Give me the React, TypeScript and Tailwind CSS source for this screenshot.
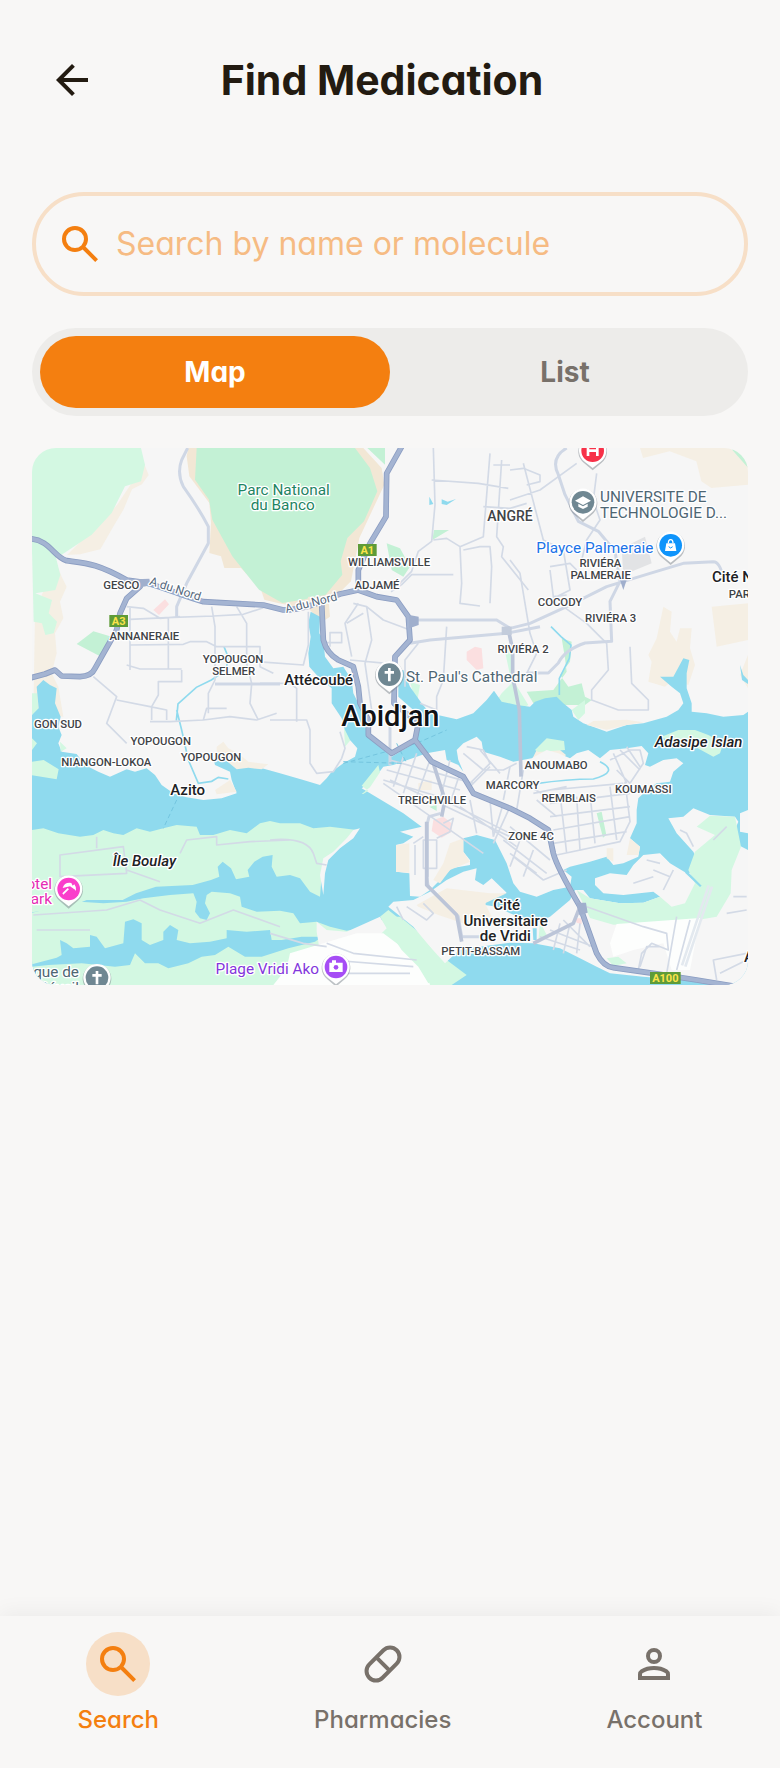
import type { ReactNode } from "react";

const HALO = "[paint-order:stroke] stroke-white [stroke-linejoin:round]";

function Arrow() {
  return (
    <svg viewBox="0 0 24 24" className="size-12" fill="currentColor" aria-hidden="true">
      <path d="M7.825 13l5.6 5.6L12 20l-8-8 8-8 1.425 1.4-5.6 5.6H20v2z" />
    </svg>
  );
}

function SearchIcon() {
  return (
    <svg viewBox="0 -960 960 960" className="size-12 shrink-0" fill="currentColor" aria-hidden="true">
      <path d="M784-120 532-372q-30 24-69 38t-83 14q-109 0-184.5-75.5T120-580q0-109 75.5-184.5T380-840q109 0 184.5 75.5T640-580q0 44-14 83t-38 69l252 252-56 56ZM380-400q75 0 127.5-52.5T560-580q0-75-52.5-127.5T380-760q-75 0-127.5 52.5T200-580q0 75 52.5 127.5T380-400Z" />
    </svg>
  );
}

function PillIcon() {
  return (
    <svg viewBox="0 0 24 24" className="size-12" fill="none" stroke="currentColor" strokeWidth="2" aria-hidden="true">
      <g transform="rotate(-45 12 12)">
        <rect x="2.3" y="7.3" width="19.4" height="9.4" rx="4.7" />
        <path d="M12 7.3v9.4" />
      </g>
    </svg>
  );
}

function PersonIcon() {
  return (
    <svg viewBox="0 0 24 24" className="size-12" fill="none" stroke="currentColor" strokeWidth="2" aria-hidden="true">
      <circle cx="12" cy="8" r="3" />
      <path d="M5 19v-1.8q0-1 .9-1.6Q8.5 14 12 14t6.100 1.600q.9.600.9 1.600V19z" />
    </svg>
  );
}

function Pin({ x, y, color, children }: { x: number; y: number; color: string; children?: ReactNode }) {
  return (
    <g transform={`translate(${x} ${y})`}>
      <path d="M0 56L-26 34A43 43 0 1 1 26 34Z" fill="#7d858d" opacity=".5" transform="translate(0 3)" />
      <path d="M0 52L-24 33A41 41 0 1 1 24 33Z" fill="#fff" />
      <circle r="34" fill={color} />
      {children}
    </g>
  );
}

function Shield({ x, y, w, text }: { x: number; y: number; w: number; text: string }) {
  return (
    <g>
      <rect x={x} y={y} width={w} height="36" fill="#5e9b38" />
      <text x={x + w / 2} y={y + 29} textAnchor="middle" className="fill-[#fbe34a] text-[33px] font-bold">
        {text}
      </text>
    </g>
  );
}

type Place = [number, number, string];

const districts: Place[] = [
  [274, 447, "GESCO"],
  [343, 600, "ANNANERAIE"],
  [609, 670, "YOPOUGON"],
  [611, 706, "SELMER"],
  [1077, 378, "WILLIAMSVILLE"],
  [1041, 448, "ADJAMÉ"],
  [1711, 380, "RIVIÉRA"],
  [1712, 416, "PALMERAIE"],
  [1590, 497, "COCODY"],
  [1742, 547, "RIVIÉRA 3"],
  [1479, 638, "RIVIÉRA 2"],
  [84, 865, "GON SUD"],
  [392, 914, "YOPOUGON"],
  [543, 964, "YOPOUGON"],
  [229, 979, "NIANGON-LOKOA"],
  [1206, 1092, "TREICHVILLE"],
  [1448, 1048, "MARCORY"],
  [1578, 988, "ANOUMABO"],
  [1616, 1086, "REMBLAIS"],
  [1840, 1058, "KOUMASSI"],
  [1503, 1201, "ZONE 4C"],
  [1352, 1546, "PETIT-BASSAM"],
  [2128, 473, "PAR"],
];

const towns: Place[] = [
  [866, 734, "Attécoubé"],
  [473, 1065, "Azito"],
  [1430, 1410, "Cité"],
  [1427, 1457, "Universitaire"],
  [1426, 1504, "de Vridi"],
];

function AbidjanMap() {
  return (
    <svg
      viewBox="6 24 2148 1611"
      role="img"
      aria-label="Map of Abidjan"
      className="block h-auto w-full rounded-3xl bg-[#f6f6f6] font-[Roboto,sans-serif]"
    >
      {/* Parks and dry ground in the north */}
      <path fill="#f5efe4" d="M338 60l18 45-20 28-30 15-25 60-30 50-40 70-60 15-40 2 150-150 60-90z" />
      <path fill="#d3f8e2" d="M6 24H333l12 50-12 50-48 15-40 80-60 65-90 60-30 12-65-15z" />
      <path fill="#f5efe4" d="M75 360l20 50 15 30-20 45 10 50-25 45 5 60-15 60 20 40 15 90-90-10 5-300z" />
      <path fill="#d3f8e2" d="M6 330l70 15 15 60-15 45-60 10 50 20-10 40 25 25-10 35-25 5-10-35-25-5zM6 760l15 0 5 50-20 15z" />
      <path fill="#f2e7d5" d="M475 24H1000l55 60 8 50-75 160-25 130-60 60-110 15-50-10-40-10-10-30-60-65-50 0-10-35-35-10 5-90-5-60-60-80-8-60z" />
      <path fill="#c3f1d5" d="M500 24H975l45 60 22 70-40 90-50 50-20 70 5 40-50 60-70 15-60 10-70-40-80-100-60-110-10-60-42-60z" />
      <path fill="#f2e7d5" d="M835 470l60 0 5 60-30 20-25-35-20-20z" />
      <path fill="#c3f1d5" d="M1012 24h53v50zM1070 310l40 15 30 55-20 30-35-20zM1212 270l45 0-50 30zM140 612l50-38 50 15-30 60z" />
      <path fill="#fbdfe0" d="M370 510l35-32 12 15-30 32zM1310 635l25-15 20 5 5 60-20 5-30-30z" />
      <path fill="#f5efe4" d="M1830 24h270l54 50v60l-110 10-30-20-15-60-80-30-80 20zM1900 500l25 15-5 60 20 30 10-40 35 0-5 60 15 50-20 60-45-15-25 20-50-15 10-60-10-20 25-50zM2045 500l110-10v110l-95 20zM2130 705l24-60v100z" />
      <path fill="#e2e3e5" d="M1775 325l70-35 20 80-85 35z" />
      <path fill="#c3f1d5" d="M2105 28l49 55V62l-20-30zM1595 595l30 10-5 60-30 40 25 35 40-10 10 40 20 10-20 15-80 0-75-5-20-35 80-5 40-55-5-40z" />
      <path fill="#d3f8e2" d="M1415 760l30-30-25-120 20 10 15 110 40 65-70 40-50-15zM1140 725l30 10-10 60zM1625 810l40-30 0 40-20 20zM940 830l25-60 30 90-50 60z" />

      {/* Lagoon */}
      <path
        fill="#8fdaee"
        d="M20 740L40 720L60 735L80 745L75 790L92 830L85 860L95 885L85 910L95 935L140 942L165 975L205 995L240 1010L290 988L315 995L350 985L375 1005L395 1035L430 1060L470 1072L520 1080L575 1075L620 1060L605 1020L600 995L555 975L550 955L580 950L620 975L680 980L750 1000L820 1020L870 1035L890 1015L905 995L940 970L975 950L982 925L960 900L945 870L935 835L905 790L905 745L860 705L838 680L835 640L842 590L835 550L842 515L870 530L868 580L880 600L885 650L910 685L940 680L965 720L970 760L990 800L1005 830L1012 890L1085 950L1160 905L1165 870L1150 810L1105 770L1105 690L1120 690L1140 740L1175 790L1200 820L1280 838L1330 820L1370 780L1392 752L1415 785L1460 795L1500 800L1515 785L1545 775L1580 770L1600 790L1625 810L1630 830L1660 850L1730 875L1790 855L1840 850L1910 830L1945 810L1960 790L1950 760L1925 740L1890 710L1930 710L1960 655L1978 660L1970 700L1970 745L1985 790L1985 815L2030 820L2080 830L2140 825L2154 815V1640H6V825L26 805Z"
      />
      <path fill="#f5efe4" d="M560 920l20-15 15 20 30 15 30 25 60 8-20 15-40-5-35 5-30-25-30-5zM555 1050l45-30 20 35-60 8zM1670 855l60 14 60-14 50-8-50-8-100 4z" />
      <path fill="#8fdaee" d="M1198 170l12 22-12 3zM1235 178l18 7 25-8-28 18-15-3zM2130 675l10 30 14 15v12l-18-12z" />

      {/* Lagoon islands */}
      <path fill="#d3f8e2" d="M6 895l15 15-15 20zM6 965l35-5 45 28-6 30-74-12zM90 905l20 20-18 10z" />
      <path fill="#d3f8e2" d="M1895 890l50-20 50 0 40 15 45 25-10 30-20 10-55-30-60-5z" />
      <path fill="#f5efe4" d="M1505 960l15-30 70 0 18 15-20 25z" />
      <path fill="#d3f8e2" d="M1515 930l35-35 52 8 3 27-80 6z" />

      {/* Île Boulay */}
      <path
        fill="#d3f8e2"
        d="M6 1170l34-5 45 15 65 10 40-5 30-15 30 10 30 5 40-20 40 10 40-10 40-10 60 5 10 25h40l50-15 50 10 40-30 30-7 30 7h60l40 15 50-5 80 10-20 30-40 30-35 35-10 40-5 65-30-15-30-40-30-10-40 5-15-30 3-35-30 5-25 15-20 25 5 20-40 8-15-33-25-20-15 15 5 30-25 10-55 15-110 5-60 20-40 20H170l-30 12-60 15-74 10z"
      />
      <path fill="#f6f6f6" d="M990 1165l-20 30-40 30-35 35-10 40-5 65-10-60 10-50 30-20 40-40 20-25z" />

      {/* Southern spit */}
      <path
        fill="#d3f8e2"
        d="M6 1418l74-18 70-15 70 5 70-5 50-10 80-10 70-5 10 25-5 30 15 20 20 5 10-20-15-30 5-25 15-10 55 5 30 10 5 30 45 15 70-3 40 8 20 30 50-5 40 15 50 12 60-10 65-32 35 0 60 50 80 80 60 45-60 40H6z"
      />
      <path
        fill="#8fdaee"
        d="M6 1573l74-20 15-8-5-45 20 10 20 15 50-5v-35l20 5 25 35 55-15 5-65 25-7 25 12v50l25 15 40-15v-25l20-20 25 15-5 30 40 10 60-5 50-10v-25l60 5 70-5 5 30 30 0 60-10 60 0-20 15-80 20-80 25-50 0-50-30-40 25-40 5-40 20-60 15-30-15h-40l-30-30-15 35-45 5-50-5-50-5-100 5-80 8z"
      />
      <path fill="#f6f6f6" d="M860 1445l30 25 60 5 100-45 20 35-50 50-100 30-50-10-10-60z" />
      <path fill="#fdfefd" d="M780 1540l100-30 100-30 80 0 60 45 50 10 30 100H730l40-50z" />

      {/* Vridi, airport and the east bank */}
      <path
        fill="#f6f6f6"
        d="M1915 1135l45-5 30-25 50 20 75 5 10 15-15 35 15 35 29 15V1640h-74l-120-20-120-10-100-10-40-20-50-25-60-30-80-15-70-2-150 20-45 42-45-50-50-60-75-60 15-15 60-5 50-25 50-35 50-25 40-10-5 35 25 15 25-20 45 43-60 22-5 15 35 5 40 20 75 30 45-20 60-50 15-30h25l20 25 90 15 70-2 50-18-20-15-90 10-60-5-25-25v-20l45-15 50 5 20-30 30-30 50-5 30 30 50 30 30-5 5-30-15-30-50-55zM2154 1110l-24 10 0 55 24 5z"
      />
      <path
        fill="#d3f8e2"
        d="M2040 1127l75 3 18 90-28 70-3 70-42 70-80 14-230 10-70-20-40-84 40 25 90 15 70-2 50-18 35 30 40-10 30-60-20-40 20-55 60-50-55-25z"
      />
      <path fill="#d3f8e2" d="M1050 1430l25-20 75 60 50 50 50 80-55 30-30-50-50-50-40-60z" />
      <path fill="#fdfefd" d="M1760 1452l250-18-30 156-55 0-25-80-90 20-60 20-10-40z" />
      <path fill="none" stroke="#e3e9ef" strokeWidth="8" d="M2046 1340l-80 240M2036 1336l-80 240" />
      <path fill="#f5efe4" d="M1160 1395l90-50 130 15 50 0-65 30 30 60-80 5-90-30-60-25z" />
      <path fill="#8fdaee" d="M1970 1292l45 45-5 4-45-43zM1508 1465h12v35h-10z" />
      <path fill="#d3f8e2" d="M1530 1445l20 40-25 20zM1730 1555l35-5 25 20-40 8z" />

      {/* Treichville to Koumassi */}
      <path
        fill="#f6f6f6"
        d="M995 1045l35-25 30-40 30-5 100-35 55-10 5 30 35 15 15 20-15-35-5-30 20-20 40-20 15 15 5 30 50 15 40 15 55-10 45-25 35 10 35 15 20-15 35-10 35 25 30-25 50-5 45-7 20 22-10 35 15 5 40-20 40-5 20 15-30 25-10 30-40 5-30 20-25 25-5 35v40l-20 45 30 25-5 30-45 20-30 5-20-25-50 15-60 15-20 10 25 20-5 30-50 10-50 20-50-15-20-25-20-60-20-40-15-30-55-15-40 10v40l20 25v15l-55 10-25 25-40 40-30 20-30-2-2-68-40-5v-80l22-5 30-20-40-15 65-15-55-40-100-60z"
      />
      <path fill="#d3f8e2" d="M1045 975l-50 62 20 15-15 10-5 0 25-20 30-45z" />
      <path fill="#f5efe4" d="M1098 1215l40-5v88l-40-3zM1260 1210l40-15v40l20 30-60 25-30 40-20-10 30-50zM1165 1030l40-10 0 30-40 0zM1800 1195l30 25-5 25-35 0zM1730 1225l20 0 0 40-20-10z" />
      <path fill="#fbdfe0" d="M1210 1140l30-10 25 20v25l-30 18-30-20zM1635 1435l20 0v18l-15-5z" />
      <path fill="#c3f1d5" d="M1700 1120l15-5 14 70-10 8zM1198 1100l22-5 0 18z" />
      <path fill="none" stroke="#8fdaee" strokeWidth="5" d="M1710 965q60 30-20 52-80 0-170 14M440 810l15 60 20 90 30 70 40-6 20-12 30 5M582 620l12 30-5 40-45 30-45 22-55 50-5 50M1563 560l30 30 30 25-5 40-30 60 0 50" />

      {/* Street grids */}
      <g fill="none" stroke="#d3dae6" strokeWidth="5" strokeLinejoin="round">
        <path d="M300 500V690M290 500l50 5 50 30 60-5M300 538l110-5 140-5 90-5 60-20M415 535v153M300 615l160-2 20-8h50l30 15h130v60l40 20M290 675l40 12h125M455 690v35h-70v40l-20 35v40M545 500l10 60v160l-20 40v60M620 500l30 50v120l15 60-5 60 25 50M190 710l70 60-15 40-15 40 60 60M260 780l100 20 50 10v30M360 845h60l100-5 80-10 80 10 60-20M520 840l10-35 60 0" />
        <path d="M690 730h90l20 15 0 100M720 840h110l10 30v100l20 30 50-5 25-40 10-30-15-50M680 665l140 10 15-60 0-100M900 620v-42h35v30h-45M950 550l50-30M1010 500l15 100-20 70 20 140M970 490l40 10 50 40 80 30M960 660l110 10M985 490l-40 60 20 100" />
        <path d="M1210 24l5 170-10 110-40 30-20 60-60 60 30-20 30-30h125M1205 120l140 10 90 15M1380 40l-20 250-70 30 5 110-5 60 60 8M1290 320l-40-25-40 5M1360 200l80 5 50-15M1390 75l50 0M1415 60l-15 230 20 30-5 30 80 100M1440 90l40-5 50 20 0 20-40 10M1300 330l50-10 30 0 5 60-5 110M1165 610l-40 50 0 80M1250 560l-10 160-20 50 0 40-50-20" />
        <path d="M1480 70l60 230 60 30 20 120-60 30M1560 380l60-10 20 20M1560 390l10 80 40-5M1440 360l30 40 30 180 20 60-30 60M1700 100l-10 80 20 60-40 60-20 80M1440 180l90-30 110-80M1600 500l70 50 60 60 5 80-50 60 0 30 80 30h90l0-30-50-50-5-110" />
        <path d="M1080 960l250 70M1070 990l220 60M1060 1020l200 60M1120 950l-30 90M1160 940l-40 120M1200 960l-40 110M1260 960l-30 120M1290 1000l-30 90M1060 1030l300 210M1080 1020l360 170M1260 1090l180 90M1290 1100l170 120M1320 1080l20 100M1380 1080l10 110M1420 1090l-30 100M1440 1100l-50 110M1350 930l60 70M1300 940l60 50 60 0 40-20M1310 920l50 10 20 40-60 60" />
        <path d="M1380 980l-60 60M1440 980l-20 100M1480 990l-20 120M1560 1050l220-20M1560 1090l240-30M1560 1130l240-30M1570 1170l230-40M1570 1210l220-35M1580 1245l190-40 30-60-15-120M1590 1060l20 180M1640 1070l10 160M1680 1060l15 150M1740 1040l20 160M1500 1040l70 40M1510 1060l100-20M1520 1080l60 50M1750 940l40 90M1770 930l60 60M1790 920l40 60M1740 960l60-30 30 0 10 40-40 60-40-40" />
        <path d="M1440 1160l120 100M1420 1200l130 100M1450 1250l90 70 70-30M1440 1240l80 60M1470 1200l-30 80M1510 1230l-30 80M1155 1215v90M1220 1200v85h-40v-85zM1240 1150l30-15-10 40-40 20M1180 1190l-30 20M1100 1400l20 40M1130 1400l60 40 20-20-30-30M1530 1490l120 40M1560 1470l130 50M1590 1450l-20 80M1620 1450l-20 90M1650 1450l-10 90M1600 1440l80 80" />
        <path d="M1670 1400l170 60 70 20 5 50-50-20-30 30-10 50M1830 1580l20-60 40 0M1940 1430l-30 170M1980 1440l-40 150M1950 1170l20 10 20 40M2050 1200l40-40M1850 1260l40 10M1870 1290l50 20M1810 1330l60-20M1900 1350l30-60M2110 1370l40 0M2090 1420l60-10M2070 1600l80-40M2060 1620l-10-60 100-20" />
        <path d="M90 1245l190-25 10 80-200 10zM10 1425l220-15 100-30 60 30 120 40 100-40 140 50M290 1290l100 35M200 1190v35M450 1240l20-40 90-10 0 25 100-10 120-5M20 1470l160 0M720 1200q110-10 130 40l10 30 30 5M720 1480l100 30 70 10M890 1510l80 30 190 20M900 1600l240 0M900 1560l250 20" />
      </g>
      <g fill="none" stroke="#cfd7e5" strokeWidth="9" strokeLinejoin="round">
        <path d="M473 24L455 60q-15 40 5 80 50 70 75 120v50L470 430l-30 70v30" />
        <path d="M1150 540h250l40 25 60-15 110-50 120-60 130-40 100-30 90-5q20 0 30 50M1140 610l60-10 230-20 100-20M1610 24q-50 30-25 80l20 60 40 80 60 30 50 60 15 90-30 60 5 120-80 5q-60 20-80 60l-30 30-60 0-50 30" />
        <path d="M555 732H750M1080 855v120M1192 1310l0-160 5-20 35-10M1190 1310l5 30 40 40 50 50 10 60 60 0" />
      </g>
      <path fill="none" stroke="#bcc5d8" strokeWidth="11" strokeLinejoin="round" d="M1433 560l15 70 0 80 20 100 5 200M1210 970l35 110-10 50M1190 1145v190l90 90 15 80M1650 1400l-20 50-80 40-40 20" />
      <path fill="none" stroke="#74c5df" strokeWidth="3" strokeDasharray="14 9" d="M440 1080l-40 85M940 970l220-60 90-40M940 965l180 5M1100 910l30 60" />

      {/* Highways */}
      <g fill="none" strokeLinejoin="round" strokeLinecap="round">
        {[
          { id: "edge", color: "#8b9dc2", width: 17 },
          { id: "core", color: "#a4b4d2", width: 12 },
        ].map((s) => (
          <path
            key={s.id}
            stroke={s.color}
            strokeWidth={s.width}
            d="M0 296C60 300 70 350 110 362C170 370 200 370 290 420L345 428C400 440 460 470 520 485L700 495L760 510C830 510 880 480 930 462L985 450M330 440L290 475L270 520L260 570L195 685Q185 708 150 710L95 708L75 690L45 702L0 714M1115 20L1070 100L1068 230L1020 310L985 390L985 450L1040 470L1100 480L1135 530L1140 600L1095 650L1092 790L1165 850L1155 900L1085 940L1015 885L1015 840L990 790L985 740L970 680L925 660Q890 640 880 600L875 490M1155 900L1205 965L1300 1010L1330 1060L1440 1105L1500 1135L1555 1170L1570 1240Q1580 1280 1650 1400L1700 1540Q1720 1580 1750 1583L1870 1600L2000 1620L2110 1638"
          />
        ))}
      </g>
      <path fill="#a0afcd" d="M1138 525l28 5v25l-28 10zM318 418l40-2 4 20-40 8zM1640 1388l28 0 5 30-25 8zM1770 420l20 0-10 30z" />
      <path fill="#c3ccdb" d="M1415 560h30v25h-30z" />

      <Shield x={238} y={525} w={56} text="A3" />
      <Shield x={984} y={312} w={56} text="A1" />
      <Shield x={1860} y={1596} w={92} text="A100" />

      {/* Place names */}
      <g textAnchor="middle" strokeWidth="8" className={HALO}>
        <g className="fill-[#3f4347] text-[34px] font-medium">
          {districts.map(([x, y, name]) => (
            <text key={`${name}-${x}`} x={x} y={y}>
              {name}
            </text>
          ))}
          <text x="1440" y="242" className="text-[42px]">ANGRÉ</text>
        </g>
        <g className="fill-[#202124] text-[45px] font-medium">
          {towns.map(([x, y, name]) => (
            <text key={name} x={x} y={y}>
              {name}
            </text>
          ))}
          <text x="2046" y="427" textAnchor="start">Cité N</text>
          <text x="2142" y="1565" textAnchor="start">A</text>
          <text x="343" y="1278" className="italic">Île Boulay</text>
          <text x="1874" y="920" textAnchor="start" className="italic">Adasipe Islan</text>
        </g>
        <text x="1081" y="857" className="fill-[#111214] text-[87px] font-medium">Abidjan</text>
        <g className="fill-[#1e8463] text-[46px]">
          <text x="761" y="164">Parc National</text>
          <text x="758" y="210">du Banco</text>
        </g>
        <g className="fill-[#4e6673] text-[46px]">
          <text x="1710" y="187" textAnchor="start">UNIVERSITE DE</text>
          <text x="1710" y="234" textAnchor="start">TECHNOLOGIE D...</text>
          <text x="1128" y="726" textAnchor="start">St. Paul's Cathedral</text>
          <text x="147" y="1612" textAnchor="end">que de</text>
          <text x="147" y="1658" textAnchor="end">Réveil</text>
        </g>
        <text x="1870" y="338" textAnchor="end" className="fill-[#1a73e8] text-[46px]">Playce Palmeraie</text>
        <text x="867" y="1603" textAnchor="end" className="fill-[#8336dc] text-[46px]">Plage Vridi Ako</text>
        <g className="fill-[#e62cb4] text-[46px]">
          <text x="66" y="1346" textAnchor="end">otel</text>
          <text x="66" y="1392" textAnchor="end">ark</text>
        </g>
        <g className="fill-[#56697c] text-[36px]">
          <text transform="translate(432 458) rotate(18)">A du Nord</text>
          <text transform="translate(846 500) rotate(-14)">A du Nord</text>
        </g>
      </g>

      <Pin x={1688} y={32} color="#f73148">
        <path d="M-14-18V16M14-18V16M-14 0H14" stroke="#fff" strokeWidth="8" />
      </Pin>
      <Pin x={1659} y={187} color="#6f8792">
        <path d="M0-18L24-5 0 8-24-5zM-14 4v9L0 20 14 13V4L0 12z" fill="#fff" />
      </Pin>
      <Pin x={1922} y={316} color="#0f94fb">
        <path d="M-13-6h26l4 23h-34z" fill="#fff" />
        <path d="M-7-6q0-11 7-11t7 11" fill="none" stroke="#fff" strokeWidth="4" />
        <path d="M-6 4q6 8 12 0" fill="none" stroke="#0f94fb" strokeWidth="3" />
      </Pin>
      <Pin x={1078} y={704} color="#6f8792">
        <path d="M0-20V20M-14-7H14" stroke="#fff" strokeWidth="8" />
      </Pin>
      <Pin x={116} y={1347} color="#fa3ecb">
        <path d="M-18-3q5-18 26-15L17 1 4-8zM17-14q7 8 5 20L10-8zM-3-3l4 4-17 16-3-4z" fill="#fff" />
      </Pin>
      <Pin x={201} y={1613} color="#6f8792">
        <path d="M0-20V20M-14-7H14" stroke="#fff" strokeWidth="8" />
      </Pin>
      <Pin x={918} y={1581} color="#a64df5">
        <path d="M-20-13h8v-7h12v7h20v28h-40z" fill="#fff" />
        <circle cy="1" r="7" fill="#a64df5" />
      </Pin>
    </svg>
  );
}

const navItems = [
  { label: "Search", icon: <SearchIcon />, active: true },
  { label: "Pharmacies", icon: <PillIcon />, active: false },
  { label: "Account", icon: <PersonIcon />, active: false },
];

export default function App() {
  return (
    <div className="flex min-h-screen flex-col bg-[#f8f7f6] font-[Inter,sans-serif] text-[#231b11] [font-feature-settings:'cv11'_1]">
      <header className="flex items-center px-8 py-10">
        <button type="button" aria-label="Back" className="flex size-20 items-center justify-center rounded-full">
          <Arrow />
        </button>
        <h1 className="flex-1 pr-24 text-center text-[41px] leading-[50px] font-bold">Find Medication</h1>
      </header>

      <main className="flex flex-1 flex-col gap-8 px-8 pt-8 pb-8">
        <label className="flex h-[104px] items-center gap-3 rounded-full border-4 border-[#f7dfc7] px-5 text-[#f47f10]">
          <SearchIcon />
          <input
            type="text"
            aria-label="Search by name or molecule"
            placeholder="Search by name or molecule"
            className="min-w-0 flex-1 bg-transparent text-[32px] leading-10 outline-none placeholder:text-[#f6bb83]"
          />
        </label>

        <div className="flex h-[88px] rounded-full bg-[#edecea] p-2 text-[28px] leading-9 font-bold">
          <button type="button" aria-pressed="true" className="flex-1 rounded-full bg-[#f47f10] text-white">
            Map
          </button>
          <button type="button" aria-pressed="false" className="flex-1 rounded-full text-[#78716a]">
            List
          </button>
        </div>

        <AbidjanMap />
      </main>

      <nav className="flex justify-around bg-[#f8f7f6] pt-4 pb-8 shadow-[0_-4px_20px_rgba(0,0,0,0.05)]">
        {navItems.map((item) => (
          <a
            key={item.label}
            href={`#${item.label.toLowerCase()}`}
            aria-current={item.active ? "page" : undefined}
            className={
              item.active
                ? "flex flex-col items-center gap-2 text-[#f47f10]"
                : "flex flex-col items-center gap-2 text-[#78716a]"
            }
          >
            <span className={item.active ? "rounded-full bg-[#f7dfc7] p-2" : "rounded-full p-2"}>{item.icon}</span>
            <span className="text-2xl font-medium">{item.label}</span>
          </a>
        ))}
      </nav>
    </div>
  );
}
